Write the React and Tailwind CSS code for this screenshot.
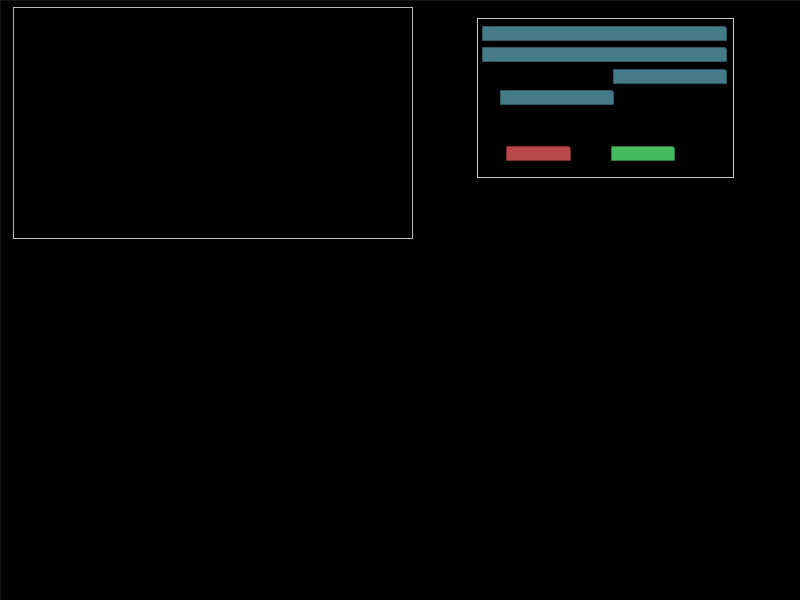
const Bar = ({ className }) => (
  <div className={`h-[15px] rounded-tr-[3px] border border-[#2f5866] bg-[#457a88] ${className}`} />
);

export default function App() {
  return (
    <div className="h-[600px] w-[800px] border-l border-t border-[#141414] bg-black">
      <div className="flex items-start">
        <div className="ml-[12px] mt-[6px] h-[232px] w-[400px] border border-[#b8b8c4]" />
        <div className="ml-[64px] mt-[17px] h-[160px] w-[257px] border border-[#c8c8c8] pl-[4px] pt-[7px]">
          <Bar className="w-[245px]" />
          <Bar className="mt-[6px] w-[245px]" />
          <Bar className="ml-[131px] mt-[7px] w-[114px]" />
          <Bar className="ml-[18px] mt-[6px] w-[114px]" />
          <div className="ml-[24px] mt-[41px] flex gap-[40px]">
            <div className="h-[15px] w-[65px] rounded-tr-[3px] border border-[#7a2e2e] bg-[#b94949]" />
            <div className="h-[15px] w-[64px] rounded-tr-[3px] border border-[#2b7a3c] bg-[#45bb5f]" />
          </div>
        </div>
      </div>
    </div>
  );
}
